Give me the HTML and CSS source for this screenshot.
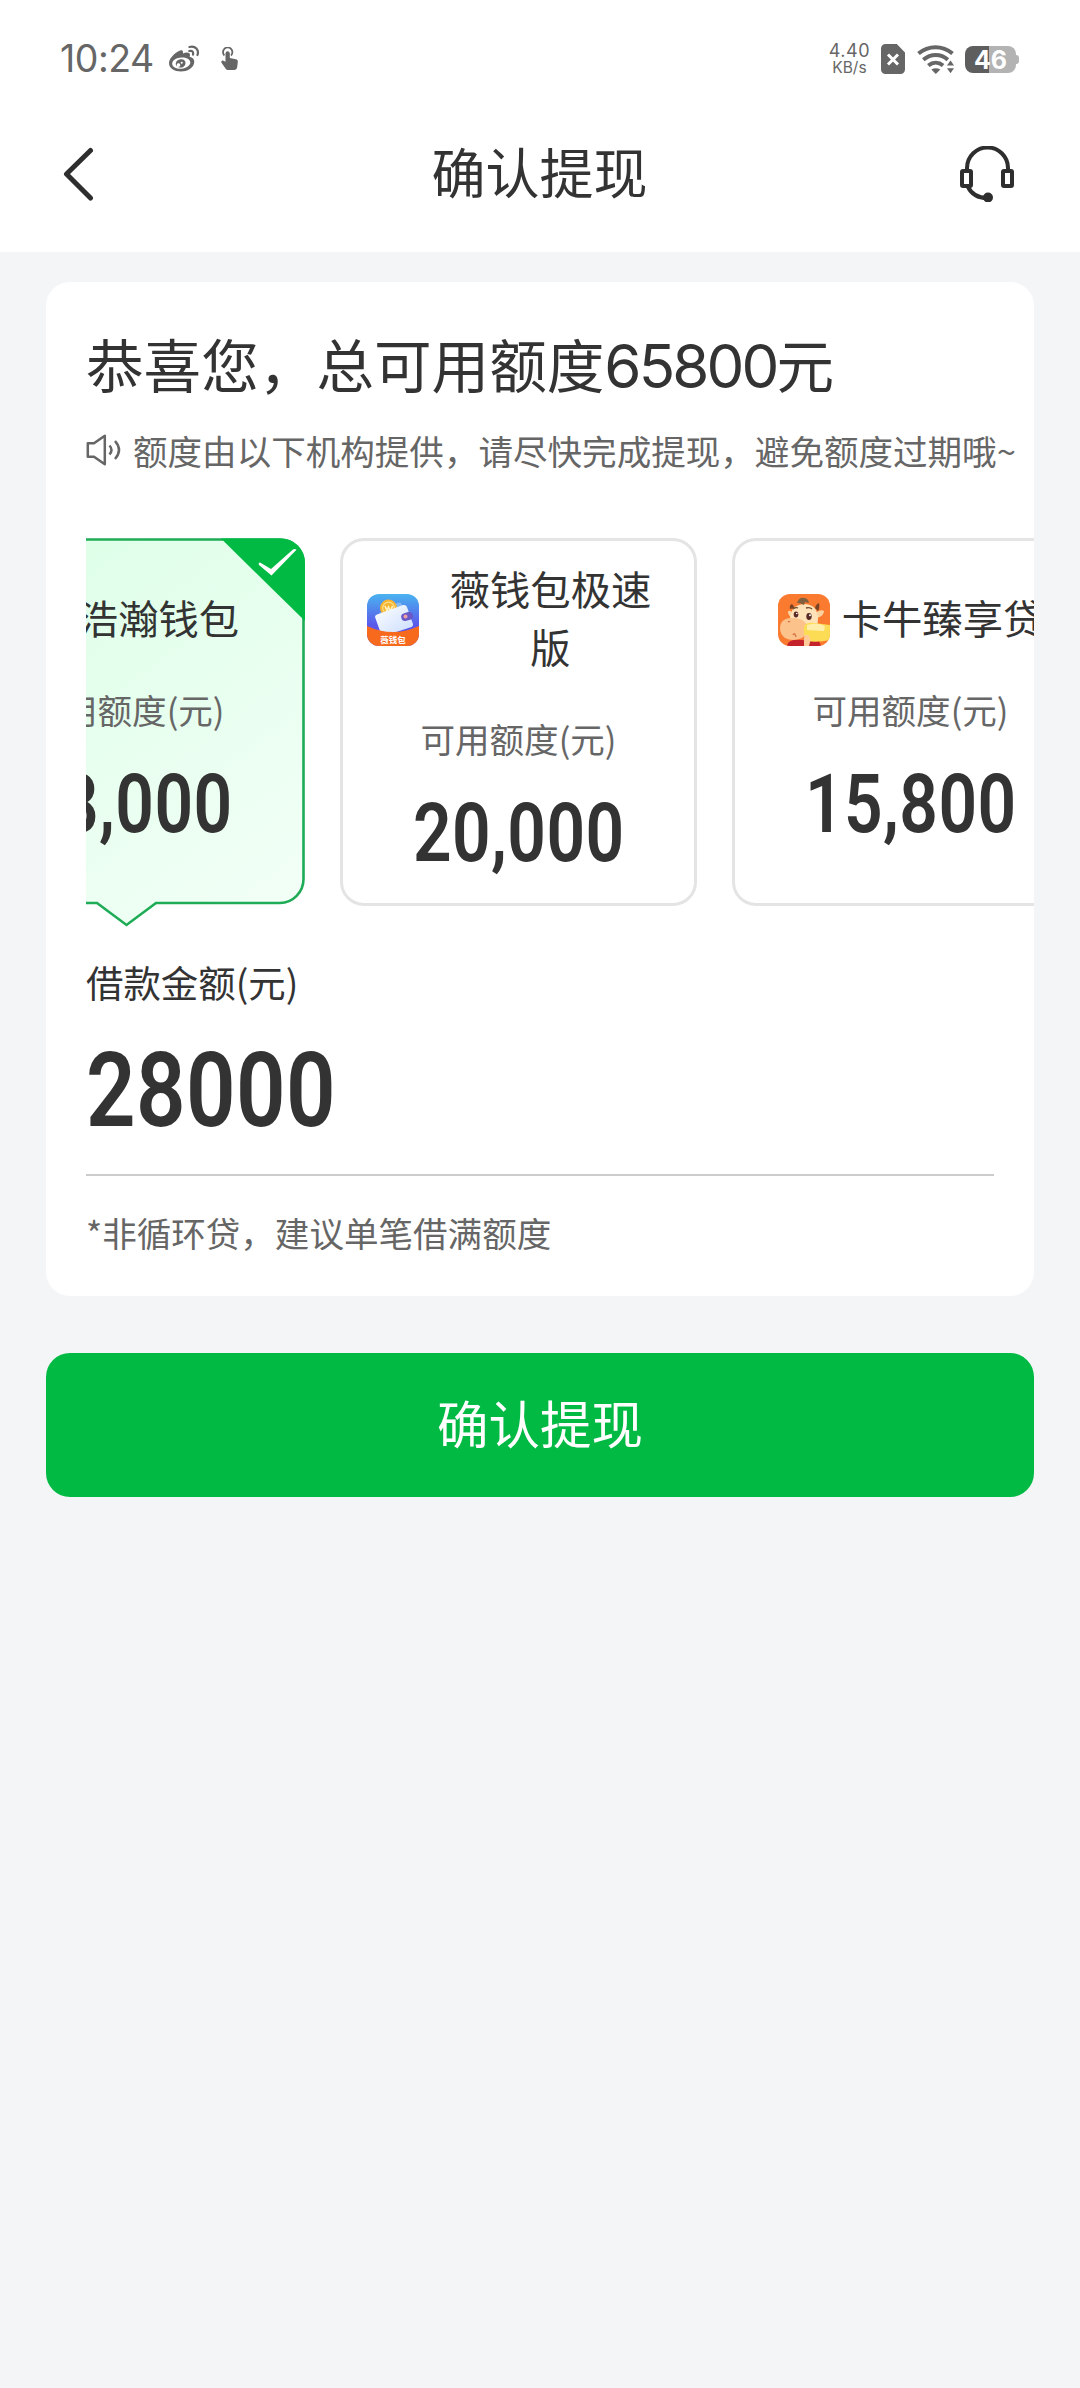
FILE: index.html
```html
<!DOCTYPE html>
<html lang="zh-CN">
<head>
<meta charset="utf-8">
<title>确认提现</title>
<link rel="stylesheet" href="styles.css">
</head>
<body>
<header class="top">
  <div class="status">
    <div class="status-left">
      <span class="clock">10:24</span>
      <svg class="weibo" width="32" height="28" viewBox="0 0 32 28">
        <path fill="#666" fill-rule="evenodd" d="M10 6c2-1.500 4-1 4 1v1.500c3-1.500 7-1.500 7 1.500 0 1-.5 1.800-.2 2 4 .7 5 3.500 4.200 6.500C23.800 23 18.500 26.500 12 26.500S0 23.500 0 18C0 14 5 8.500 10 6zM12.500 12.500C6.500 12.800 3 15.800 3.200 19c.2 3 4.300 5 9.300 4.700s9-3.300 8.800-6.400c-.2-3-4-5-8.800-4.800z"/>
        <path fill="#666" fill-rule="evenodd" d="M11.500 14.200c3.300-.4 5.300 1.500 5 4.200-.3 2.500-2.500 4.200-5 4.200-3 0-5-1.800-4.700-4.300.3-2.300 2.300-3.800 4.700-4.100zM9.800 18.300a1.800 1.800 0 1 0 .2 3.500 1.800 1.800 0 0 0-.2-3.500zM13 16.800a1 1 0 1 0 .1 1.900 1 1 0 0 0-.1-1.900z"/>
        <path fill="none" stroke="#666" stroke-width="2.200" stroke-linecap="round" d="M20.500 2c6-1.500 9.700 3 8 8M20.300 6c3-.6 4.300 1 3.700 3.600"/>
      </svg>
      <svg class="touch" width="18" height="24" viewBox="0 0 18 24">
        <path fill="none" stroke="#666" stroke-width="1.800" d="M3.400 8.500a4.700 4.700 0 1 1 6.600 0"/>
        <path fill="#666" d="M4.500 6a2.200 2.200 0 0 1 4.300 0v5l6 1.300c1.500.4 2.200 1.300 2 2.700l-.6 5c-.2 1.800-1.500 3-3 3H7.500c-1.500 0-2.200-.5-3-1.500L.5 15.800c-.6-1 .2-2.300 1.400-2.200l2.600 1.200z"/>
      </svg>
    </div>
    <div class="status-right">
      <div class="speed"><span class="rate">4.40</span><span class="unit">KB/s</span></div>
      <svg class="sim" width="24" height="30" viewBox="0 0 24 30">
        <path fill="#666" d="M4.500 0h11.300L24 8.500v17a4.500 4.500 0 0 1-4.500 4.500h-15A4.500 4.500 0 0 1 0 25.500v-21A4.500 4.500 0 0 1 4.500 0z"/>
        <path stroke="#fff" stroke-width="3" d="M7 10.500l10 10M17 10.500l-10 10"/>
      </svg>
      <svg class="wifi" width="38" height="30" viewBox="0 0 38 30">
        <g fill="none" stroke="#666" stroke-width="4">
          <path d="M1.500 9.500c10-8.500 24-8.500 34 0"/>
          <path d="M6.300 15.800c7.500-6.300 17.500-6.300 24.500 0"/>
          <path d="M11.300 21.500c4.600-3.800 10.300-3.800 14.800 0"/>
        </g>
        <path fill="#666" d="M14.300 25.500c3-1.800 6-1.800 9 0l-4.500 4.500z"/>
        <path fill="#666" stroke="#fff" stroke-width="1.500" d="M33.500 15l5 7.300H28.500zM33.500 30.500l-5-7H38.500z"/>
      </svg>
      <div class="battery">46</div>
    </div>
  </div>
  <nav class="nav">
    <svg width="32" height="56" viewBox="0 0 32 56"><path d="M28.500 4.500L4.500 28l24 24" fill="none" stroke="#2e2e2e" stroke-width="5" stroke-linecap="round" stroke-linejoin="round"/></svg>
    <h1 class="nav-title">确认提现</h1>
    <svg width="56" height="56" viewBox="0 0 56 56" fill="none" stroke="#2e2e2e" stroke-width="4">
      <path d="M8 24v-2a20 20 0 0 1 41 0v2"/>
      <rect x="3" y="25" width="9" height="15" rx="1"/>
      <rect x="44" y="25" width="9" height="15" rx="1"/>
      <path d="M9 41c4 8 10 11 19 11"/>
      <circle cx="29" cy="51.500" r="3" fill="#2e2e2e"/>
    </svg>
  </nav>
</header>

<main class="page">
  <section class="panel">
    <h2 class="headline">恭喜您，总可用额度<span class="headline-num">65800</span>元</h2>
    <p class="notice">
      <svg width="36" height="32" viewBox="0 0 36 32" fill="none" stroke="#666" stroke-width="2.500" stroke-linejoin="round">
        <path d="M1.800 9.300H8L18.800 1.800v28.400L8 22.700H1.800z"/>
        <path d="M23.500 11.500q4 4.500 0 9M29 7q8 9 0 18"/>
      </svg>
      <span>额度由以下机构提供，请尽快完成提现，避免额度过期哦~</span>
    </p>

    <div class="offers">
      <article class="offer selected">
        <svg class="bubble" width="357" height="390" viewBox="0 0 357 390">
          <defs>
            <linearGradient id="mint" x1="0.300" y1="0" x2="1" y2="1">
              <stop offset="0" stop-color="#deffe8"/><stop offset="1" stop-color="#f3fff7"/>
            </linearGradient>
          </defs>
          <path fill="url(#mint)" stroke="#1fac56" stroke-width="2.600" d="M24 1.500H332a23.500 23.500 0 0 1 23.500 23.500V341a24 24 0 0 1-23.500 24H208L178.500 387 149 365H24A22.500 22.500 0 0 1 1.500 341V24A22.500 22.500 0 0 1 24 1.500z"/>
          <path fill="#00ba44" d="M273 0.500H333a24 24 0 0 1 24 24V83z"/>
          <path fill="#fff" d="M312 24.500l11 6.500L345 11.500q2-1 3.500.3L323.500 37.500 311 27q-1-2.500 1-2.500z"/>
        </svg>
        <div class="brand"><span class="logo"></span><span class="name">浩瀚钱包</span></div>
        <div class="label">可用额度(元)</div>
        <div class="amount"><span class="din">28,000</span></div>
      </article>

      <article class="offer">
        <div class="brand">
          <svg class="logo" width="52" height="52" viewBox="0 0 52 52">
            <defs>
              <linearGradient id="sky" x1="0" y1="0" x2="0" y2="1"><stop offset="0" stop-color="#49b4f0"/><stop offset=".6" stop-color="#5b58ea"/></linearGradient>
              <linearGradient id="paper" x1="0" y1="0" x2="1" y2="1"><stop offset="0" stop-color="#fff"/><stop offset="1" stop-color="#c9dcff"/></linearGradient>
              <clipPath id="round"><rect width="52" height="52" rx="12"/></clipPath>
            </defs>
            <g clip-path="url(#round)">
              <rect width="52" height="52" fill="url(#sky)"/>
              <path fill="#7fb8f5" d="M12 19l18-10q4-1.500 5 2l2 7z"/>
              <circle cx="21.500" cy="14" r="8.500" fill="#f6b432"/>
              <circle cx="21.500" cy="14" r="5.800" fill="none" stroke="#fde08a" stroke-width="1.200"/>
              <path d="M18 12l2 5 1.500-4 2 4 2-5" fill="none" stroke="#fff3c0" stroke-width="1.600"/>
              <path fill="url(#paper)" d="M8 23q0-2 2-2.500L36 11q3-.6 4 2l6 17q.6 2-1.500 3L20 41q-5 0-7-4z"/>
              <rect x="34" y="18.500" width="12" height="8" rx="4" fill="#6a59c8" transform="rotate(-15 40 22)"/>
              <circle cx="38.500" cy="22.500" r="2" fill="#f0a0a0"/>
              <path fill="#f76a1e" d="M0 32q26 12 52 0v20H0z"/>
              <text x="26" y="48.500" class="logo-text">薇钱包</text>
            </g>
          </svg>
          <span class="name">薇钱包极速版</span>
        </div>
        <div class="label">可用额度(元)</div>
        <div class="amount"><span class="din">20,000</span></div>
      </article>

      <article class="offer">
        <div class="brand">
          <svg class="logo" width="52" height="52" viewBox="0 0 52 52">
            <g clip-path="url(#round)">
              <rect width="52" height="52" fill="#fa7a30"/>
              <path fill="#fbd3a0" d="M39 18q4-3 7-1 0 5-7 7zM13 17q-3-1-3 1 0 4 4 5z"/>
              <path fill="#7a4324" d="M12 15q-1-4 2-5l3 4zM37 14q1-4 4-5 1 5-1 8z"/>
              <path fill="#ffe2b8" d="M12 24q1-13 14-14 13 0 14 14l-1 18H14z"/>
              <path fill="#80603f" d="M19 9q2-6 7-5 4 0 5 5l-4-1-1 3q-3-2-7-2z"/>
              <path fill="#c4232b" d="M10 49q5-5 13-3l18 1 2 5H9z"/>
              <path fill="#fcc28c" d="M2 34q0-9 10-10 13-1 17 7 1 10-5 13-9 4-17 0-5-4-5-10z"/>
              <path fill="#fddc55" d="M26 32q3-4 10-3l16 2v15q-13 3-23 1-4-7-3-15z"/>
              <path fill="#ffedaa" d="M29 31q10-3 18 1l-1 5-17-1z"/>
              <path fill="#ffcb99" d="M26 47q-1-7 4-6 4 3 1 11h-5z"/>
              <ellipse cx="18" cy="20.500" rx="2.300" ry="3" fill="#5a2a26"/>
              <ellipse cx="31" cy="22.500" rx="2.700" ry="3.400" fill="#5a2a26"/>
              <circle cx="18.800" cy="19.500" r=".8" fill="#fff"/><circle cx="32" cy="21.200" r="1" fill="#fff"/>
              <path d="M15 15q3-2 5-1M28 14q4-1 6 1" fill="none" stroke="#6b4a2c" stroke-width="1.300"/>
              <path d="M10 28q1-1 2 0M15 41q2-3 3 2" fill="none" stroke="#d97848" stroke-width="1.500"/>
            </g>
          </svg>
          <span class="name">卡牛臻享贷</span>
        </div>
        <div class="label">可用额度(元)</div>
        <div class="amount"><span class="din">15,800</span></div>
      </article>
    </div>

    <div class="field">
      <div class="field-label">借款金额(元)</div>
      <div class="field-value"><span class="din">28000</span></div>
    </div>
    <p class="hint">*非循环贷，建议单笔借满额度</p>
  </section>

  <button class="submit">确认提现</button>
</main>
</body>
</html>
```
FILE: styles.css
```css
* { box-sizing: border-box; margin: 0; padding: 0; }

body {
  width: 1080px;
  min-height: 2388px;
  background: #f4f5f7;
  color: #333;
  font-family: "Noto Sans CJK SC", "Noto Sans", sans-serif;
  overflow-x: hidden;
}

svg { display: block; flex: none; }

.top { height: 252px; background: #fff; }

.status {
  display: flex;
  justify-content: space-between;
  align-items: center;
  height: 118px;
  padding: 0 61px 0 60px;
  color: #666;
  font-family: Inter, sans-serif;
}
.status-left, .status-right { display: flex; align-items: center; }
.clock { width: 109px; font-size: 37.500px; letter-spacing: -0.500px; line-height: 44px; }
.touch { margin-left: 20px; }
.speed { display: flex; flex-direction: column; align-items: center; margin-right: 11px; }
.rate { font-size: 18px; line-height: 17px; letter-spacing: 0.5px; }
.unit { font-size: 15.500px; line-height: 17px; }
.wifi { margin: 0 10px 0 12px; }
.battery {
  position: relative;
  width: 51px;
  height: 27px;
  margin-right: 3px;
  border-radius: 8px;
  background: linear-gradient(90deg, #5e5e5e 0 24px, #b3b3b3 24px);
  color: #fff;
  font-size: 25px;
  font-weight: 700;
  line-height: 28px;
  text-align: center;
}
.battery::after {
  content: "";
  position: absolute;
  left: 51px;
  top: 9px;
  width: 3px;
  height: 9px;
  border-radius: 0 3px 3px 0;
  background: #b3b3b3;
}

.nav {
  display: flex;
  justify-content: space-between;
  align-items: center;
  height: 112px;
  padding: 0 65px 0 62px;
}
.nav-title { margin: -6px 0 0 26px; font-size: 54px; font-weight: 400; line-height: 80px; }

.page { padding: 30px 46px 0; }

.panel {
  height: 1014px;
  padding: 41px 0 0 40px;
  border-radius: 24px;
  background: #fff;
  overflow: hidden;
}
.headline { height: 80px; font-size: 57.600px; font-weight: 400; line-height: 80px; white-space: nowrap; }
.headline-num { font-family: Inter, sans-serif; font-size: 60px; letter-spacing: -2.900px; }

.notice {
  display: flex;
  align-items: center;
  gap: 11px;
  margin-top: 23px;
  color: #666;
  font-size: 34.560px;
  line-height: 48px;
  white-space: nowrap;
}

.offers {
  display: flex;
  gap: 35px;
  height: 390px;
  margin-top: 64px;
  overflow: hidden;
}
.offer {
  display: flex;
  flex: none;
  flex-direction: column;
  align-items: center;
  justify-content: center;
  width: 357px;
  height: 368px;
  padding: 0 24px;
  border: 3px solid #e4e4e4;
  border-radius: 24px;
}
.selected { position: relative; margin-left: -138px; border-color: transparent; }
.bubble { position: absolute; left: -3px; top: -3px; }
.brand { display: flex; align-items: center; gap: 12px; position: relative; }
.logo { width: 52px; height: 52px; flex: none; }
.logo-text { fill: #fff; font-size: 8.500px; font-weight: 700; text-anchor: middle; }
.name { margin: -3px 0 3px; font-size: 40.320px; line-height: 57.600px; text-align: center; }
.label { position: relative; margin-top: 36px; color: #666; font-size: 34.560px; line-height: 48px; }
.amount { position: relative; height: 96px; margin-top: 24px; font-family: Roboto, sans-serif; font-size: 81px; line-height: 96px; }

.din {
  display: inline-block;
  font-weight: 650;
  letter-spacing: 0.5px;
  transform: scaleX(0.835);
}

.field { width: 908px; height: 248px; padding-top: 28px; border-bottom: 2px solid #ccc; }
.field-label { font-size: 37.440px; line-height: 52px; }
.field-value { height: 120px; margin-top: 23px; font-family: Roboto, sans-serif; font-size: 104px; line-height: 120px; }
.field-value .din { transform-origin: left center; }

.hint { margin-top: 32px; color: #666; font-size: 34.560px; line-height: 48px; }

.submit {
  display: block;
  width: 988px;
  height: 144px;
  margin-top: 57px;
  padding-bottom: 6px;
  border: 0;
  border-radius: 24px;
  background: #00ba44;
  color: #fff;
  font-family: inherit;
  font-size: 51.500px;
  line-height: 72px;
}
```
